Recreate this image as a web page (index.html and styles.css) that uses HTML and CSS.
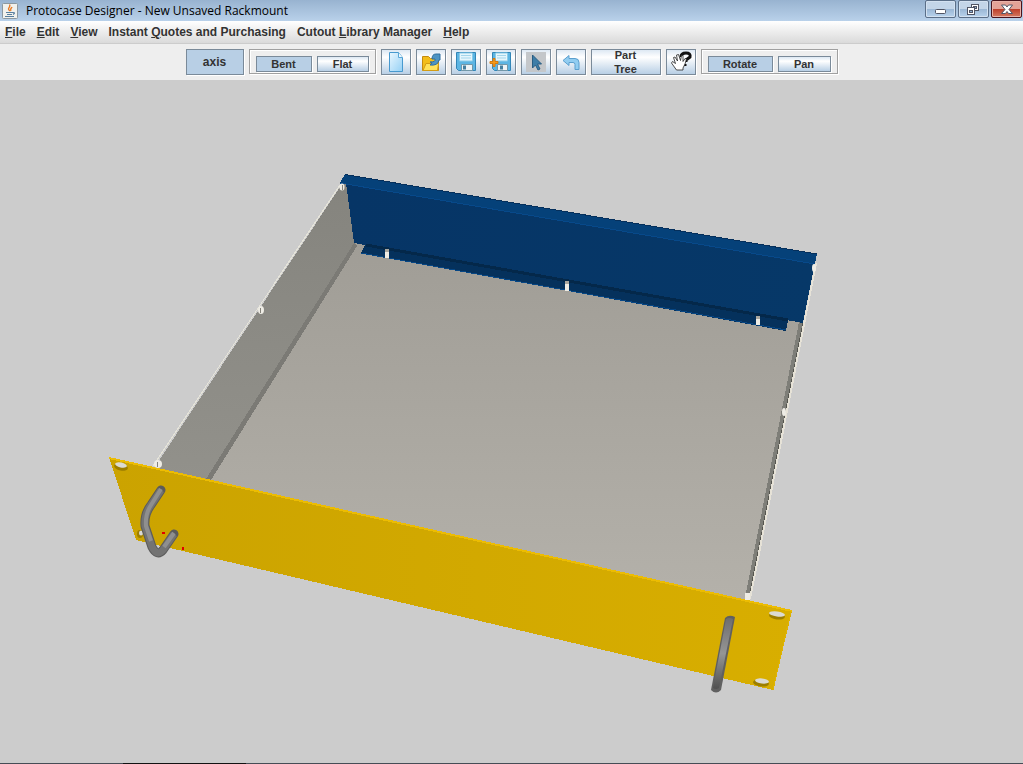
FILE: index.html
```html
<!DOCTYPE html>
<html lang="en">
<head>
<meta charset="utf-8">
<title>Protocase Designer - New Unsaved Rackmount</title>
<link rel="stylesheet" href="styles.css">
</head>
<body>
<div class="window">
  <header class="titlebar">
    <svg class="java-icon" width="16" height="16" viewBox="0 0 16 16" aria-hidden="true">
      <rect x=".5" y=".5" width="15" height="15" rx="1" fill="#f1f1ed" stroke="#8c989f"/>
      <path d="M8 8C4 5.500 9.500 4 7.500 1.500M9 8C7.500 6 9.500 5 10 4" fill="none" stroke="#e77a24" stroke-width="1.400"/>
      <path d="M4 9.500h7M5 11.500h5M3 13.500h9M11 9.500q3 0 0 2" fill="none" stroke="#587f9e" stroke-width="1.200"/>
    </svg>
    <span class="title">Protocase Designer - New Unsaved Rackmount</span>
    <div class="window-controls">
      <button class="wbtn" type="button" aria-label="Minimize"><svg width="29" height="16" viewBox="0 0 29 16"><rect x="9.500" y="8.500" width="10" height="4" rx="1" fill="#fff" stroke="#505565"/></svg></button>
      <button class="wbtn" type="button" aria-label="Restore"><svg width="29" height="16" viewBox="0 0 29 16"><g fill="#fff" stroke="#505565"><rect x="12.500" y="3.500" width="7" height="6"/><rect x="14.500" y="5.500" width="3" height="2" fill="#8fb0d0"/><rect x="8.500" y="6.500" width="7" height="7"/><rect x="10.500" y="9.500" width="3" height="2" fill="#8fb0d0"/></g></svg></button>
      <button class="wbtn close" type="button" aria-label="Close"><svg width="29" height="16" viewBox="0 0 29 16"><path d="M9.500 4h4l1.500 2 1.500-2h4l-3.500 4.500 3.500 4h-4l-1.500-2-1.500 2h-4l3.500-4z" fill="#fff" stroke="#535666"/></svg></button>
    </div>
  </header>

  <nav class="menubar">
    <button type="button"><u>F</u>ile</button>
    <button type="button"><u>E</u>dit</button>
    <button type="button"><u>V</u>iew</button>
    <button type="button">Instant <u>Q</u>uotes and Purchasing</button>
    <button type="button">Cutout <u>L</u>ibrary Manager</button>
    <button type="button"><u>H</u>elp</button>
  </nav>

  <div class="toolbar">
    <button class="btn axis selected" type="button">axis</button>
    <div class="group">
      <button class="btn small bent selected" type="button">Bent</button>
      <button class="btn small flat" type="button">Flat</button>
    </div>
    <button class="btn icon" type="button" aria-label="New"><svg width="26" height="24" viewBox="0 0 26 24">
      <path d="M6.500 2.500h9l4 5v14h-13z" fill="url(#paper)" stroke="#4799cf"/><path d="M15.500 2.500v5h4" fill="#eefaff" stroke="#5aa7d7"/>
    </svg></button>
    <button class="btn icon" type="button" aria-label="Open"><svg width="26" height="24" viewBox="0 0 26 24">
      <path d="M4.500 6.500h6l2 2h8v12h-16z" fill="#f2bd1b" stroke="#c38a12"/><path d="M5 20.500l3-7h12.500l-1 7z" fill="#ffe25a" stroke="#d39c13"/>
      <path d="M12 12q6 0 5-3l-3 0q0-5 4-5h4v6l-1 0q-1 6-9 5l2-2z" fill="#4e94c3" stroke="#2f6f9f"/>
    </svg></button>
    <button class="btn icon" type="button" aria-label="Save"><svg width="26" height="24" viewBox="0 0 26 24">
      <path d="M3.500 2.500h19v18h-17l-2-2z" fill="#5cb5e3" stroke="#3286b7"/><path d="M6.500 3h13v8h-13z" fill="#e6f6fc" stroke="#8bcbe8"/><path d="M8 5.500h10M8 8h10" stroke="#a4d5eb"/><path d="M8.500 14.500h11v6h-11z" fill="#eef3f5" stroke="#7297a8"/><path d="M10 15.500h3v4h-3z" fill="#457f9f"/>
    </svg></button>
    <button class="btn icon" type="button" aria-label="Save as"><svg width="26" height="24" viewBox="0 0 26 24">
      <path d="M4.500 2.500h18v18h-16l-2-2z" fill="#5cb5e3" stroke="#3286b7"/><path d="M7.500 3h12v8h-12z" fill="#e6f6fc" stroke="#8bcbe8"/><path d="M9 5.500h9M9 8h9" stroke="#a4d5eb"/><path d="M9.500 14.500h10v6h-10z" fill="#eef3f5" stroke="#7297a8"/><path d="M12 15.500h3v4h-3z" fill="#457f9f"/>
      <path d="M5 8.500h2v3h3v2h-3v3h-2v-3h-3v-2h3z" fill="#f39a19" stroke="#d87a0e"/>
    </svg></button>
    <button class="btn icon" type="button" aria-label="Select"><svg width="26" height="24" viewBox="0 0 26 24">
      <path d="M3 2h20v20h-20z" fill="#c4c7ca"/><path d="M9.500 5v13l3-3 2.500 5 2-1-2.500-5h4z" fill="#3d7da7" stroke="#285d83"/>
    </svg></button>
    <button class="btn icon" type="button" aria-label="Undo"><svg width="26" height="24" viewBox="0 0 26 24">
      <path d="M5 10.500l6-5v3h6q4 0 4 4v7h-4v-5q0-2-2-2h-4v3z" fill="#91cdf1" stroke="#5b9fce"/>
    </svg></button>
    <button class="btn tree" type="button">Part<br>Tree</button>
    <button class="btn icon" type="button" aria-label="Help"><svg width="26" height="24" viewBox="0 0 26 24">
      <path d="M13 7q0-4 5-4 5 0 4 4l-4 3v2M17 14v2" fill="none" stroke="#111" stroke-width="3"/>
      <path d="M8.500 20l-5-7 1-1.500 3 2-2-6 1.500-.5 2.500 4-1-6 2-.5 2 6 1-5 1.500 0v6l2-3 1.500.5-1.500 5-2 4v2z" fill="#fff" stroke="#222" stroke-width=".8"/>
    </svg></button>
    <div class="group">
      <button class="btn small rotate selected" type="button">Rotate</button>
      <button class="btn small pan" type="button">Pan</button>
    </div>
  </div>

  <main class="viewport">
    <svg class="scene" viewBox="0 80 1023 683" role="img" aria-label="Rackmount enclosure model">
      <defs>
        <linearGradient id="paper" x2="1" y2="1"><stop stop-color="#eaf7ff"/><stop offset="1" stop-color="#94d0f5"/></linearGradient>
        <linearGradient id="floor" x2="0" y2="1"><stop stop-color="#a09d96"/><stop offset="1" stop-color="#b4b1aa"/></linearGradient>
        <linearGradient id="side" x2="0" y2="1"><stop stop-color="#85847e"/><stop offset="1" stop-color="#92918b"/></linearGradient>
        <linearGradient id="front"><stop stop-color="#cba300"/><stop offset="1" stop-color="#d8ae00"/></linearGradient>
        <linearGradient id="back"><stop stop-color="#063566"/><stop offset="1" stop-color="#063868"/></linearGradient>
        <linearGradient id="bar" x2="0" y2="1"><stop stop-color="#6e6e6e"/><stop offset=".5" stop-color="#959595"/><stop offset="1" stop-color="#505050"/></linearGradient>
      </defs>
      <g shape-rendering="crispEdges">
        <path d="M354 243L802 322 746 601 208 480z" fill="url(#floor)"/>
        <path d="M342 184L347 184 355 243 208 482 154 468z" fill="url(#side)"/>
        <path d="M354 243L357 246 211 480 206 479z" fill="#7b7a75"/>
        <path d="M342 182L153 466" stroke="#e6e4d9" stroke-width="1"/>
        <path d="M799 322L803 322 749 598 745 598z" fill="#7e7e78"/>
        <path d="M803 323L749 598" stroke="#55554e" stroke-width="1"/>
        <path d="M816 263L750 599" stroke="#e6e2d7" stroke-width="2"/>
        <path d="M346 183L815 262 803 323 354 243z" fill="url(#back)"/>
        <path d="M345 174L817 254 815 264 340 183z" fill="#054179"/>
        <path d="M345 174.500L817 254" stroke="#052f5b"/>
        <path d="M340 183L815 264" stroke="#07498a"/>
        <path d="M365 245L788 320 786 331 361 253z" fill="#05315c"/>
        <path d="M366 245L788 320" stroke="#04284a" stroke-width="3"/>
        <path d="M361 253L786 330" stroke="#064684" stroke-width="1"/>
        <path d="M109 457L792 611 773 690 136 540z" fill="url(#front)"/>
        <path d="M109 458L792 611" stroke="#ecbc02" stroke-width="2"/>
        <path d="M791 611L773 690" stroke="#dfb300"/>
        <path d="M162 532h3v2h-3zM182 547h2v3h-2z" fill="#e00000"/>
      </g>
      <g fill="#eeece5">
        <path d="M385 250h4v8h-4zM565 282h4v9h-4zM756 317h4v8h-4z"/>
        <ellipse cx="342" cy="187" rx="2.500" ry="3.500"/><ellipse cx="261" cy="310" rx="3" ry="4"/><ellipse cx="158" cy="464" rx="4" ry="4"/>
        <ellipse cx="814" cy="268" rx="2" ry="4"/><ellipse cx="784" cy="412" rx="2" ry="4"/><path d="M745 593h5v7h-5z"/>
      </g>
      <path d="M385 249h4v3h-4zM565 281h4v3h-4zM756 316h4v3h-4z" fill="#aaa79f"/>
      <path d="M342.500 185v5M260.500 308v5M157.500 462v5" stroke="#85837b"/>
      <g fill="#9c7e00">
        <ellipse cx="121" cy="467" rx="7" ry="3.500" transform="rotate(12 121 467)"/><ellipse cx="777" cy="616" rx="8" ry="3.500" transform="rotate(7 777 616)"/>
        <ellipse cx="761" cy="683" rx="8" ry="3.500" transform="rotate(7 761 683)"/><ellipse cx="140" cy="534" rx="3" ry="4"/>
      </g>
      <g fill="#dbdad3">
        <ellipse cx="121" cy="465" rx="6" ry="2.500" transform="rotate(12 121 465)"/><ellipse cx="777" cy="614" rx="8" ry="2.500" transform="rotate(7 777 614)"/>
        <ellipse cx="762" cy="681" rx="7" ry="2.500" transform="rotate(7 762 681)"/><ellipse cx="141" cy="533" rx="2" ry="2.500"/>
      </g>
      <g fill="none" stroke-linejoin="round">
        <path d="M161 490L151 505Q144 514 145 526L152 547Q157 557 163 550L174 534" stroke="#5b5b5b" stroke-width="9" stroke-linecap="round"/>
        <path d="M161 490L151 505Q144 514 145 526L152 547Q157 557 163 550L174 534" stroke="#737373" stroke-width="7"/>
        <path d="M161 489L151 505Q145 514 146 526L151 541M164 547L174 533" stroke="#8f8f8f" stroke-width="4"/>
      </g>
      <path d="M725 618q4-4 10-1L721 690q-5 5-10 0z" fill="#606060"/>
      <path d="M726 619q3-2 7 0L719 688q-3 2-6 0z" fill="url(#bar)"/>
    </svg>
  </main>
  <div class="edge"></div>
</div>
</body>
</html>
```

FILE: styles.css
```css
* { box-sizing: border-box; }
body { margin: 0; font-family: "Liberation Sans", Arial, sans-serif; color: #333; }
button { font-family: inherit; color: inherit; margin: 0; }
.window { display: flex; flex-direction: column; min-height: 100vh; background: #ccc; }

.titlebar { display: flex; align-items: center; height: 21px; padding: 0 1px 0 2px; background: linear-gradient(#98b3d0, #b9d1ea); }
.java-icon { margin-right: 8px; }
.title { flex: 1; font: 12px/20px "Open Sans", sans-serif; color: #000; white-space: nowrap; }
.window-controls { display: flex; align-self: flex-start; gap: 2px; }
.wbtn { width: 31px; height: 18px; padding: 0; border: 1px solid #5b6f88; border-radius: 2px; background: linear-gradient(#c3d5e8 48%, #9ab6d4 50%, #b8d2ec); box-shadow: inset 0 0 0 1px #d3e1f0; }
.wbtn svg { display: block; }
.close { border-color: #48131c; background: linear-gradient(#e3a297 48%, #bd3d29 50%, #d47a61); box-shadow: inset 0 0 0 1px #e8b2a8; }

.menubar { display: flex; gap: 11px; height: 23px; padding: 0 5px; background: linear-gradient(#fff, #dadada); border-bottom: 1px solid #ccc; }
.menubar button { padding: 0; border: 0; background: none; font-size: 12px; font-weight: bold; line-height: 20px; white-space: nowrap; }

.toolbar { display: flex; justify-content: center; align-items: flex-start; gap: 5px; height: 36px; padding-top: 5px; background: #eee; }
.btn { display: flex; align-items: center; justify-content: center; height: 26px; padding: 0; border: 1px solid #7a8a99; background: linear-gradient(#dde8f3, #fff 30%, #b8cfe5); font-size: 11px; font-weight: bold; box-shadow: 1px 1px #fff; }
.btn.selected { background: #b8cfe5; }
.icon { width: 30px; }
.axis { width: 58px; font-size: 12px; }
.tree { width: 70px; line-height: 14px; }
.group { display: flex; gap: 5px; height: 25px; padding: 6px; border: 1px solid #a0a0a0; box-shadow: 1px 1px #fff, inset 1px 1px #fff; }
.small { height: 16px; }
.bent { width: 56px; }
.flat { width: 52px; }
.rotate { width: 65px; }
.pan { width: 53px; }

.viewport { flex: 1; display: flex; background: #ccc; }
.scene { display: block; width: 100%; }
.edge { height: 1px; background: linear-gradient(90deg, #454c55 12%, #111 12%, #111 24%, #454c55 24%); }
```
